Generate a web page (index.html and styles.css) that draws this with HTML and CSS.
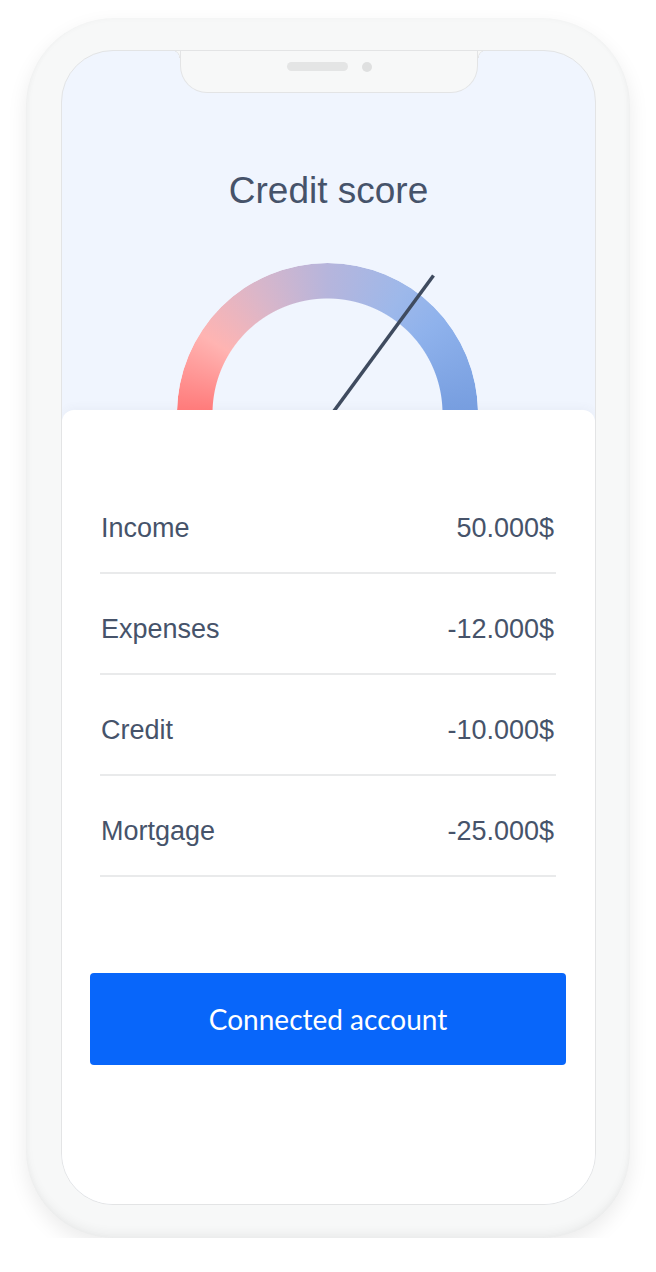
FILE: index.html
```html
<!DOCTYPE html>
<html lang="en">
<head>
  <meta charset="UTF-8">
  <meta name="viewport" content="width=device-width, initial-scale=1.0">
  <title>Credit score</title>
  <link rel="stylesheet" href="styles.css">
</head>
<body>
  <div class="phone">
    <div class="screen">
      <div class="notch">
        <span class="speaker"></span>
        <span class="camera"></span>
      </div>

      <h1 class="title">Credit score</h1>

      <div class="gauge">
        <div class="gauge-ring"></div>
        <svg class="gauge-needle" width="301" height="147" viewBox="0 0 301 147">
          <line x1="155.5" y1="150" x2="256.5" y2="12.5" stroke="#3f4b5f" stroke-width="3.5"/>
        </svg>
      </div>

      <div class="card">
        <ul class="rows">
          <li class="row"><span>Income</span><span>50.000$</span></li>
          <li class="row"><span>Expenses</span><span>-12.000$</span></li>
          <li class="row"><span>Credit</span><span>-10.000$</span></li>
          <li class="row"><span>Mortgage</span><span>-25.000$</span></li>
        </ul>
        <button class="connect">Connected account</button>
      </div>
    </div>
  </div>
</body>
</html>
```

FILE: styles.css
```css
body {
  margin: 0;
  background: #ffffff;
  font-family: "Liberation Sans", Arial, sans-serif;
  color: #46536a;
}

/* Phone frame */
.phone {
  box-sizing: border-box;
  width: 604px;
  height: 1220px;
  margin: 18px 0 0 26px;
  padding: 32px 34px 33px 35px;
  background: #f7f8f8;
  border-radius: 88px;
  box-shadow: 0 8px 20px rgba(0, 0, 0, 0.08), inset 0 -6px 10px rgba(0, 0, 0, 0.04), inset 0 0 6px rgba(0, 0, 0, 0.03);
}

.screen {
  position: relative;
  box-sizing: border-box;
  height: 100%;
  display: flex;
  flex-direction: column;
  align-items: center;
  background: #f0f5fe;
  border: 1px solid #e3e4e5;
  border-radius: 52px;
  overflow: hidden;
}

/* Notch with speaker + camera */
.notch {
  position: absolute;
  top: -1px;
  left: 118px;
  box-sizing: border-box;
  width: 298px;
  height: 43px;
  padding-top: 12px;
  display: flex;
  justify-content: center;
  align-items: flex-start;
  gap: 14px;
  background: #f7f8f8;
  border: 1px solid #e3e4e5;
  border-top: none;
  border-radius: 0 0 27px 27px;
}

.notch::before,
.notch::after {
  content: "";
  position: absolute;
  top: 0;
  width: 8px;
  height: 8px;
}

.notch::before {
  left: -9px;
  background: radial-gradient(circle at 0 100%, transparent 7px, #e3e4e5 7.5px, #f7f8f8 8.5px);
}

.notch::after {
  right: -9px;
  background: radial-gradient(circle at 100% 100%, transparent 7px, #e3e4e5 7.5px, #f7f8f8 8.5px);
}

.speaker {
  width: 61px;
  height: 9px;
  border-radius: 5px;
  background: #e4e5e5;
}

.camera {
  width: 10px;
  height: 10px;
  border-radius: 50%;
  background: #dfe0e0;
}

/* Heading */
.title {
  margin: 118px 0 0;
  font-size: 37px;
  font-weight: 400;
  line-height: 44px;
  color: #46536a;
}

/* Gauge */
.gauge {
  position: relative;
  width: 301px;
  height: 147px;
  margin-top: 50px;
  margin-left: -2px;
  overflow: hidden;
  flex-shrink: 0;
}

.gauge-ring {
  width: 301px;
  height: 301px;
  border-radius: 50%;
  background: conic-gradient(from 270deg, #ff7878 0deg, #ffb4b2 32deg, #dab6c9 60deg, #b6b5dc 90deg, #9db8ea 122deg, #8fb2ec 140deg, #769ddf 180deg, #769ddf 360deg);
  -webkit-mask: radial-gradient(circle, transparent 114.5px, #000 115.5px);
  mask: radial-gradient(circle, transparent 114.5px, #000 115.5px);
}

.gauge-needle {
  position: absolute;
  top: 0;
  left: 0;
}

/* Summary card */
.card {
  flex: 1;
  align-self: stretch;
  padding: 63px 29px 0 28px;
  background: #ffffff;
  border-radius: 12px 12px 0 0;
  box-shadow: 0 -3px 8px rgba(70, 83, 106, 0.04);
}

.rows {
  list-style: none;
  margin: 0 10px;
  padding: 0;
}

.row {
  display: flex;
  justify-content: space-between;
  padding: 40px 2px 29px 1px;
  font-size: 27px;
  line-height: 30px;
  border-bottom: 2px solid #e9eaeb;
}

.connect {
  display: block;
  width: 100%;
  height: 92px;
  margin-top: 96px;
  padding: 0;
  background: #0866fa;
  color: #ffffff;
  border: none;
  border-radius: 4px;
  font-family: Lato, "Open Sans", sans-serif;
  font-size: 28px;
  cursor: pointer;
}
```
